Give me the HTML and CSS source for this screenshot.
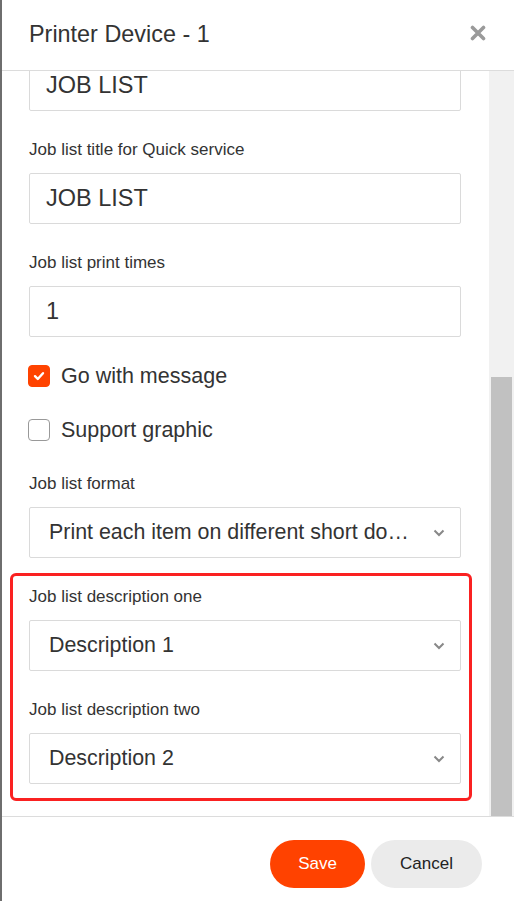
FILE: index.html
```html
<!DOCTYPE html>
<html lang="en">
<head>
  <meta charset="UTF-8" />
  <meta name="viewport" content="width=device-width, initial-scale=1" />
  <title>Printer Device - 1</title>
  <link rel="stylesheet" href="styles.css">
</head>
<body>
  <div class="modal">
    <header class="modal-header">
      <h1>Printer Device - 1</h1>
      <button class="close-btn" aria-label="Close">
        <svg width="16" height="16" viewBox="0 0 16 16"><path d="M2.5 2.5 L13.5 13.5 M13.5 2.5 L2.5 13.5" stroke="#9a9a9a" stroke-width="3.6" stroke-linecap="round"/></svg>
      </button>
    </header>
    <div class="modal-main">
      <div class="modal-body" id="modalBody">
        <div class="field">
          <label>Printer name</label>
          <input class="text-input" type="text" value="Printer Device - 1" />
        </div>
        <div class="field">
          <label>Printer IP address</label>
          <input class="text-input" type="text" value="192.168.1.100" />
        </div>
        <div class="field">
          <label>Paper width</label>
          <input class="text-input" type="text" value="80mm" />
        </div>
        <div class="field">
          <label>Job list print mode</label>
          <input class="text-input" type="text" value="Auto" />
        </div>
        <div class="field">
          <label>Job list title</label>
          <input class="text-input" type="text" value="JOB LIST" />
        </div>
        <div class="field">
          <label>Job list title for Quick service</label>
          <input class="text-input" type="text" value="JOB LIST" />
        </div>
        <div class="field">
          <label>Job list print times</label>
          <input class="text-input" type="text" value="1" />
        </div>
        <div class="check-row">
          <span class="checkbox checked">
            <svg width="12" height="10" viewBox="0 0 12 10"><path d="M2 5.2 L4.8 8 L10 2.2" fill="none" stroke="#fff" stroke-width="2.4" stroke-linecap="round" stroke-linejoin="round"/></svg>
          </span>
          <span class="check-label">Go with message</span>
        </div>
        <div class="check-row">
          <span class="checkbox"></span>
          <span class="check-label">Support graphic</span>
        </div>
        <div class="field tight">
          <label>Job list format</label>
          <div class="select-box">
            <span class="select-value">Print each item on different short document</span>
            <svg class="chevron" width="12" height="8" viewBox="0 0 12 8"><path d="M1.5 1.5 L6 6 L10.5 1.5" fill="none" stroke="#888" stroke-width="2"/></svg>
          </div>
        </div>
        <div class="highlight">
          <div class="field">
            <label>Job list description one</label>
            <div class="select-box">
              <span class="select-value">Description 1</span>
              <svg class="chevron" width="12" height="8" viewBox="0 0 12 8"><path d="M1.5 1.5 L6 6 L10.5 1.5" fill="none" stroke="#888" stroke-width="2"/></svg>
            </div>
          </div>
          <div class="field last">
            <label>Job list description two</label>
            <div class="select-box">
              <span class="select-value">Description 2</span>
              <svg class="chevron" width="12" height="8" viewBox="0 0 12 8"><path d="M1.5 1.5 L6 6 L10.5 1.5" fill="none" stroke="#888" stroke-width="2"/></svg>
            </div>
          </div>
        </div>
      </div>
      <div class="scrollbar"><div class="scroll-thumb"></div></div>
    </div>
    <footer class="modal-footer">
      <button class="btn btn-save">Save</button>
      <button class="btn btn-cancel">Cancel</button>
    </footer>
  </div>
  <script>
    const body = document.getElementById('modalBody');
    body.scrollTop = body.scrollHeight;
  </script>
</body>
</html>
```
FILE: styles.css
```css
* { margin: 0; padding: 0; box-sizing: border-box; }
html, body { height: 100%; }
body {
  font-family: "Liberation Sans", Arial, sans-serif;
  color: #333; background: #fff;
}
.modal {
  height: 901px; display: flex; flex-direction: column;
  border-left: 2px solid #6e6e6e; background: #fff;
}
.modal-header {
  height: 71px; flex: none; display: flex; align-items: center; justify-content: space-between;
  padding: 0 28px 0 27px; border-bottom: 1px solid #dcdcdc;
}
.modal-header h1 {
  font-size: 23.4px; font-weight: normal; color: #333; margin-top: -1px;
}
.close-btn {
  background: none; border: none; cursor: pointer; display: flex; margin-top: -5px;
}
.modal-main { flex: 1; display: flex; min-height: 0; }
.modal-body {
  flex: 1; overflow: hidden; padding: 21px 28px 15px 27px;
}
.scrollbar {
  width: 25px; flex: none; background: #f1f1f1;
  display: flex; flex-direction: column; justify-content: flex-end; padding: 0 2px;
}
.scroll-thumb { height: 439px; background: #c1c1c1; }
.field { margin-bottom: 28px; }
.field.tight { margin-bottom: 15px; }
.field.last { margin-bottom: 0; }
.field label {
  display: block; font-size: 17px; line-height: 22px; margin-bottom: 12px; color: #333;
}
.text-input {
  width: 100%; height: 51px; border: 1px solid #dadada; border-radius: 2px;
  padding: 0 16px; font-family: inherit; font-size: 23.5px; color: #333; outline: none;
}
.check-row {
  display: flex; align-items: center; gap: 11px; height: 22px; margin-bottom: 32px;
}
.checkbox {
  width: 22px; height: 22px; border: 1px solid #999; border-radius: 4px;
  display: flex; align-items: center; justify-content: center; flex: none; margin-left: -1px;
}
.checkbox.checked { background: #ff4300; border-color: #ff4300; }
.check-label { font-size: 21.5px; color: #333; }
.select-box {
  height: 51px; border: 1px solid #dadada; border-radius: 2px;
  display: flex; align-items: center; gap: 14px; padding: 0 15px 0 19px;
}
.select-value {
  flex: 1; font-size: 21.4px; color: #333;
  white-space: nowrap; overflow: hidden; text-overflow: ellipsis;
}
.chevron { flex: none; }
.highlight {
  margin: 0 -11px 0 -19px; padding: 10px 8px 14px 16px;
  border: 3px solid #fa2121; border-radius: 6px;
}
.modal-footer {
  height: 85px; flex: none; border-top: 1px solid #dcdcdc;
  display: flex; align-items: flex-start; justify-content: flex-end; gap: 6px; padding: 23px 32px 0 0;
}
.btn {
  height: 48px; border: none; border-radius: 24px; font-family: inherit; font-size: 17px; cursor: pointer;
}
.btn-save { width: 95px; background: #ff4200; color: #fff; }
.btn-cancel { width: 111px; background: #ebebeb; color: #222; }
```
